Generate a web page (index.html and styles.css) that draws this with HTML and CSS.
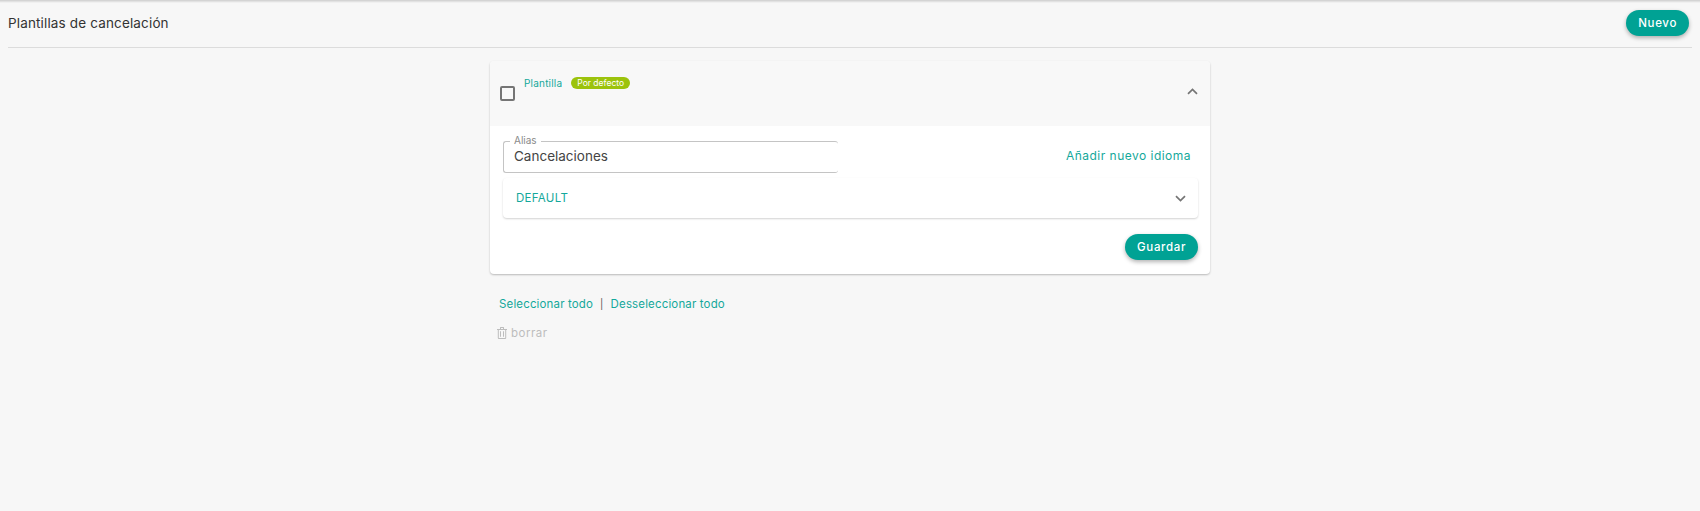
FILE: index.html
```html
<!DOCTYPE html>
<html lang="es">
<head>
    <meta charset="UTF-8">
    <title>Plantillas de cancelación</title>
    <link rel="stylesheet" href="styles.css">
</head>
<body>
    <div class="page-header">
        <h1>Plantillas de cancelación</h1>
        <button class="btn" type="button">Nuevo</button>
    </div>
    <div class="content">
        <div class="card">
            <div class="card-head">
                <span class="checkbox"></span>
                <div class="card-title">
                    <span class="teal">Plantilla</span>
                    <span class="badge">Por defecto</span>
                </div>
                <svg class="chevron" width="11" height="7" viewBox="0 0 11 7"><path d="M1 5.8 L5.5 1.4 L10 5.8" fill="none" stroke="#757575" stroke-width="1.7"/></svg>
            </div>
            <div class="card-body">
                <div class="alias-row">
                    <div class="alias-field">
                        <span class="alias-label">Alias</span>
                        <span class="alias-value">Cancelaciones</span>
                    </div>
                    <a class="add-lang">Añadir nuevo idioma</a>
                </div>
                <div class="lang-row">
                    <span class="teal">DEFAULT</span>
                    <svg class="chevron" width="11" height="7" viewBox="0 0 11 7"><path d="M1 1.2 L5.5 5.6 L10 1.2" fill="none" stroke="#757575" stroke-width="1.7"/></svg>
                </div>
                <div class="card-actions">
                    <button class="btn" type="button">Guardar</button>
                </div>
            </div>
        </div>
        <div class="select-links">
            <a class="teal">Seleccionar todo</a>
            <span class="sep">|</span>
            <a class="teal">Desseleccionar todo</a>
        </div>
        <div class="delete-link">
            <svg width="10" height="12" viewBox="0 0 10 12"><path d="M0 2 H10 V3 H9.2 V11 Q9.2 12 8.2 12 H1.8 Q0.8 12 0.8 11 V3 H0 Z M3 2 V0.6 Q3 0 3.6 0 H6.4 Q7 0 7 0.6 V2 H6 V1 H4 V2 Z M1.8 3 V11 H8.2 V3 Z M3 4.2 H4 V9.8 H3 Z M6 4.2 H7 V9.8 H6 Z" fill="#bdbdbd" fill-rule="evenodd"/></svg>
            <span>borrar</span>
        </div>
    </div>
</body>
</html>
```

FILE: styles.css
```css
body {
    font-family: 'Inter', 'Open Sans', sans-serif;
    background: linear-gradient(#cdcdcd, #f7f7f7 3px);
    background-color: #f7f7f7;
    color: #333;
    margin: 0;
    height: 511px;
    padding-top: 1px;
    overflow: hidden;
    box-sizing: border-box;
}
.page-header {
    display: flex;
    justify-content: space-between;
    align-items: center;
    height: 46px;
    margin: 0 8px;
    padding: 0 3px 0 0;
    border-bottom: 1px solid #dcdcdc;
}
h1 {
    font-size: 13.5px;
    font-weight: 400;
    letter-spacing: 0.15px;
    margin: 0;
    position: relative;
    top: -1px;
}
.btn {
    height: 26px;
    padding: 0 12px;
    background-color: #00a294;
    color: #fff;
    border: none;
    border-radius: 13px;
    font-family: inherit;
    font-size: 11.5px;
    font-weight: 500;
    letter-spacing: 0.65px;
    box-shadow: 0 2px 4px rgba(0, 0, 0, 0.3);
}
.page-header .btn {
    position: relative;
    top: -1px;
}
.content {
    width: 720px;
    margin: 13px 0 0 490px;
}
.card {
    background-color: #fff;
    border-radius: 4px;
    box-shadow: 0 1px 2px rgba(0, 0, 0, 0.25);
}
.card-head {
    display: flex;
    align-items: flex-start;
    height: 65px;
    background-color: #f8f8f8;
    border-radius: 4px 4px 0 0;
    padding: 0 12px 0 10px;
}
.checkbox {
    width: 11px;
    height: 11px;
    border: 2px solid #757575;
    border-radius: 2px;
    margin-top: 25px;
}
.card-title {
    display: flex;
    align-items: center;
    gap: 9px;
    margin: 16px 0 0 9px;
    flex: 1;
    font-size: 10px;
    letter-spacing: 0.2px;
}
.teal {
    color: #14a89b;
}
.badge {
    background-color: #9cc30c;
    color: #fff;
    font-size: 8.5px;
    letter-spacing: 0;
    line-height: 12px;
    padding: 0 6px;
    border-radius: 6px;
}
.card-head .chevron {
    margin-top: 27px;
}
.card-body {
    padding: 15px 12px 14px 13px;
}
.alias-row {
    display: flex;
    justify-content: space-between;
    align-items: center;
    padding-right: 7px;
}
.alias-field {
    position: relative;
    width: 324px;
    height: 30px;
    border: 1px solid #c4c4c4;
    border-right-width: 0;
    border-radius: 3px;
    display: flex;
    align-items: center;
    padding-left: 10px;
}
.alias-label {
    position: absolute;
    top: -8px;
    left: 6px;
    padding: 0 4px;
    background-color: #fff;
    color: #8a8a8a;
    font-size: 10px;
    line-height: 12px;
}
.alias-value {
    color: #444;
    font-size: 13.5px;
    position: relative;
    top: -1px;
}
.add-lang {
    color: #14a89b;
    font-size: 12px;
    letter-spacing: 0.48px;
    position: relative;
    top: -2px;
}
.lang-row {
    display: flex;
    justify-content: space-between;
    align-items: center;
    height: 40px;
    margin-top: 5px;
    padding: 0 12px 0 13px;
    border-radius: 4px;
    font-size: 11.5px;
    letter-spacing: 0.3px;
    box-shadow: 0 1px 2px rgba(0, 0, 0, 0.18);
}
.card-actions {
    display: flex;
    justify-content: flex-end;
    margin-top: 16px;
}
.select-links {
    display: flex;
    align-items: center;
    gap: 7px;
    margin: 23px 0 0 9px;
    font-size: 11.5px;
    letter-spacing: 0.15px;
    line-height: 14px;
}
.sep {
    color: #555;
    font-size: 10px;
}
.delete-link {
    display: flex;
    align-items: center;
    gap: 4px;
    margin: 15px 0 0 7px;
    color: #bdbdbd;
    font-size: 11.5px;
    letter-spacing: 0.5px;
}
```
